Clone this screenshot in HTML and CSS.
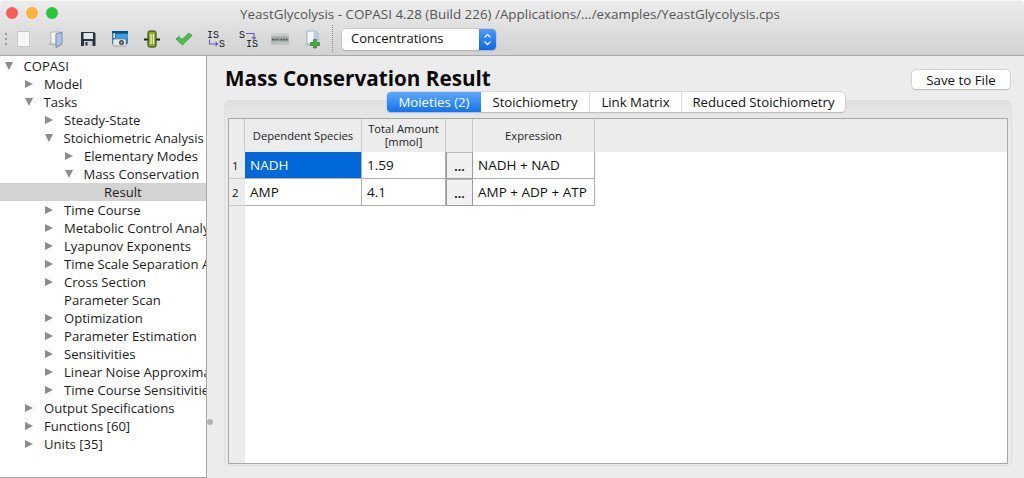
FILE: index.html
```html
<!DOCTYPE html>
<html>
<head>
<meta charset="utf-8">
<title>YeastGlycolysis - COPASI</title>
<link rel="stylesheet" href="styles.css">
</head>
<body>
<div class="window">

<div class="titlebar">
  <div class="lights"><span class="light red"></span><span class="light yellow"></span><span class="light green"></span></div>
  <div class="wintitle">YeastGlycolysis - COPASI 4.28 (Build 226) /Applications/.../examples/YeastGlycolysis.cps</div>
</div>

<div class="toolbar">
  <div class="grip"><i></i><i></i><i></i></div>
  <div class="tools">
    <svg class="tool" width="16" height="18" viewBox="0 0 16 18"><rect x="1.500" y="1.500" width="12" height="15" fill="#f6f6f6" stroke="#c8c8c8"/></svg>
    <svg class="tool" width="16" height="18" viewBox="0 0 16 18"><path d="M0 15l3-3V2h11v13l-5 2.500V15H3z" fill="#bdbdbd"/><path d="M3 2h10v1L8 4v10H3z" fill="#f4f4f4" stroke="#9a9a9a" stroke-width=".6"/><path d="M8 4l6-2v12l-6 3.500z" fill="#a7c4e4" stroke="#5f83ab" stroke-width=".8"/></svg>
    <svg class="tool" width="16" height="18" viewBox="0 0 16 18"><path d="M1 2h13l1.500 1.500V16H1z" fill="#27343f"/><rect x="3.500" y="3" width="9.500" height="6" fill="#e6e6e6"/><rect x="4" y="11" width="8.500" height="5" fill="#cfcfcf"/><rect x="5.500" y="12" width="2" height="3.500" fill="#27343f"/></svg>
    <svg class="tool" width="16" height="18" viewBox="0 0 16 18"><rect x="0" y="1" width="16" height="13" rx="1" fill="#1b86cc"/><rect x="0" y="1" width="16" height="2.500" fill="#0c4f86"/><path d="M4 4h12v5H4z" fill="#3aa0e0"/><rect x="1" y="9" width="13" height="7" rx="1.500" fill="#e8e8e8" stroke="#777" stroke-width=".6"/><circle cx="9.500" cy="12.500" r="2.500" fill="#4a4a4a"/><circle cx="9.500" cy="12.500" r="1" fill="#bbb"/><rect x="1.500" y="3" width="1.500" height="5" fill="#e8f2fa"/></svg>
    <svg class="tool" width="16" height="18" viewBox="0 0 16 18"><path d="M0 9.500h16" stroke="#222" stroke-width="2.200"/><rect x="4" y="1" width="8" height="16" rx="1.500" fill="#8eab22" stroke="#2c3510"/><path d="M7 4v10M9.500 4v10" stroke="#eef5c8" stroke-width="1.300"/></svg>
    <svg class="tool" width="16" height="18" viewBox="0 0 16 18"><path d="M0 9l3-2.500 3 3L13 3l3 2.500L6.500 15z" fill="#4cc04a" stroke="#2c8a34" stroke-width=".7"/></svg>
    <svg class="tool" width="18" height="18" viewBox="0 0 18 18"><text x="0" y="8" class="ico">IS</text><text x="12" y="17" class="ico">S</text><path d="M2.500 9.500v4.500h8M8.500 12l2.200 2-2.200 2" fill="none" stroke="#5b5fc0" stroke-width="1.100"/></svg>
    <svg class="tool" width="18" height="18" viewBox="0 0 18 18"><text x="0" y="8" class="ico">S</text><text x="7" y="17" class="ico">IS</text><path d="M7 3.500h8v5M13 7l2 2.200 2-2.200" fill="none" stroke="#5b5fc0" stroke-width="1.100"/></svg>
    <svg class="tool" width="18" height="18" viewBox="0 0 18 18"><rect x="0" y="3" width="18" height="12" fill="#a9b4ae"/><rect x="0" y="3" width="18" height="3" fill="#c8d0cc"/><rect x="0" y="12" width="18" height="3" fill="#bcc4c0"/><path d="M1 9.500h16" stroke="#4f5b66" stroke-width="2.200" stroke-dasharray="2 .7"/><path d="M2 14L14 5" stroke="#c79ab0" stroke-width=".7"/></svg>
    <svg class="tool" width="16" height="18" viewBox="0 0 16 18"><path d="M0 15l3-3V3h9v13H3z" fill="#c8c8c8"/><path d="M3 1h8l3 2v11H3z" fill="#f5f7fa" stroke="#8aa3bd" stroke-width=".8"/><path d="M9.500 2l4.500 1v8H9.500z" fill="#b7cde4"/><path d="M6.500 12.500h3v-3h3v3h3v3h-3v2.500h-3v-2.500h-3z" fill="#49ad3c" stroke="#256f22" stroke-width=".6"/></svg>
  </div>
  <div class="sep"></div>
  <div class="combo">
    <span class="combo-text">Concentrations</span>
    <span class="combo-arrows"><svg width="9" height="15" viewBox="0 0 9 15"><path d="M1.500 5.500L4.500 2.500l3 3M1.500 9.500l3 3 3-3" fill="none" stroke="#fff" stroke-width="1.300"/></svg></span>
  </div>
</div>

<div class="body">
  <ul class="tree">
    <li class="l0"><span class="arrow down"></span>COPASI</li>
    <li class="l1"><span class="arrow right"></span>Model</li>
    <li class="l1"><span class="arrow down"></span>Tasks</li>
    <li class="l2"><span class="arrow right"></span>Steady-State</li>
    <li class="l2"><span class="arrow down"></span>Stoichiometric Analysis</li>
    <li class="l3"><span class="arrow right"></span>Elementary Modes</li>
    <li class="l3"><span class="arrow down"></span>Mass Conservation</li>
    <li class="l4 current"><span class="arrow"></span>Result</li>
    <li class="l2"><span class="arrow right"></span>Time Course</li>
    <li class="l2"><span class="arrow right"></span>Metabolic Control Analysis</li>
    <li class="l2"><span class="arrow right"></span>Lyapunov Exponents</li>
    <li class="l2"><span class="arrow right"></span>Time Scale Separation Analysis</li>
    <li class="l2"><span class="arrow right"></span>Cross Section</li>
    <li class="l2"><span class="arrow"></span>Parameter Scan</li>
    <li class="l2"><span class="arrow right"></span>Optimization</li>
    <li class="l2"><span class="arrow right"></span>Parameter Estimation</li>
    <li class="l2"><span class="arrow right"></span>Sensitivities</li>
    <li class="l2"><span class="arrow right"></span>Linear Noise Approximation</li>
    <li class="l2"><span class="arrow right"></span>Time Course Sensitivities</li>
    <li class="l1"><span class="arrow right"></span>Output Specifications</li>
    <li class="l1"><span class="arrow right"></span>Functions [60]</li>
    <li class="l1"><span class="arrow right"></span>Units [35]</li>
  </ul>

  <div class="splitter"><span class="handle"></span></div>

  <div class="main">
    <div class="head">
      <h1>Mass Conservation Result</h1>
      <button class="btn">Save to File</button>
    </div>
    <div class="tabs">
      <span class="tab active">Moieties (2)</span><span class="tab t2">Stoichiometry</span><span class="tab t3">Link Matrix</span><span class="tab t4">Reduced Stoichiometry</span>
    </div>
    <div class="pane">
      <div class="frame">
        <table class="grid">
          <colgroup><col class="c0"><col class="c1"><col class="c2"><col class="c3"><col class="c4"></colgroup>
          <tr class="hdr"><th></th><th>Dependent Species</th><th>Total Amount<br>[mmol]</th><th></th><th>Expression</th></tr>
          <tr><td class="num">1</td><td class="sel">NADH</td><td>1.59</td><td class="more"><span class="dots">...</span></td><td>NADH + NAD</td></tr>
          <tr><td class="num">2</td><td>AMP</td><td>4.1</td><td class="more"><span class="dots">...</span></td><td>AMP + ADP + ATP</td></tr>
        </table>
        <div class="gutter"></div>
      </div>
    </div>
  </div>
</div>

</div>
</body>
</html>
```

FILE: styles.css
```css
html, body { margin:0; padding:0; background:#fff; }
body { font-family:"Open Sans", "DejaVu Sans", sans-serif; font-size:13.1px; color:#111; }
ul { list-style:none; margin:0; padding:0; }

.window { width:1024px; height:478px; display:flex; flex-direction:column; overflow:hidden; border-radius:5px 5px 0 0; background:#ececec; }

/* title bar */
.titlebar { height:25px; flex:none; position:relative; background:linear-gradient(#ececec, #e0e0e0); box-sizing:border-box; border-top:1px solid #f6f6f6; }
.lights { display:flex; gap:8px; padding:6px 0 0 6px; }
.light { width:12px; height:12px; border-radius:50%; }
.red { background:#fc5b57; }
.yellow { background:#fdb43c; }
.green { background:#27c840; }
.wintitle { position:absolute; left:0; right:0; top:4px; text-align:center; color:#555; font-size:13.400px; line-height:18px; padding-right:4px; }

/* toolbar */
.toolbar { height:31px; flex:none; display:flex; align-items:center; box-sizing:border-box; border-bottom:1px solid #a9a9a9; background:linear-gradient(#e0e0e0, #d2d2d2); padding-bottom:3px; }
.grip { width:2px; margin-left:5px; display:flex; flex-direction:column; gap:3px; }
.grip i { width:2px; height:2px; background:#9a9a9a; display:block; }
.tools { display:grid; grid-template-columns:repeat(10, 32px); margin-left:1px; align-items:center; justify-items:center; }
.tool { overflow:visible; }
.ico { font-family:"Liberation Mono", monospace; font-size:10px; fill:#111; }
.sep { width:0; height:27px; margin-left:4px; border-left:1px dotted #888; }
.combo { width:154px; height:21px; margin:2px 0 0 9px; box-sizing:border-box; display:flex; background:#fff; border-radius:4px; box-shadow:0 0 0 .5px #b5b5b5, 0 1px 1px #aaa; overflow:hidden; }
.combo-text { flex:1; padding-left:9px; line-height:19px; font-size:13px; color:#111; }
.combo-arrows { width:17px; display:flex; align-items:center; justify-content:center; background:linear-gradient(#4a9bfb, #0b66ea); }

/* tree and main */
.body { flex:1; display:flex; min-height:0; }
.tree { width:206px; flex:none; box-sizing:border-box; background:#fff; border-bottom:1px solid #aaa; padding-top:1px; overflow:hidden; height:100%; }
.tree li { height:18px; line-height:18px; white-space:nowrap; color:#1c1c1c; display:flex; align-items:center; overflow:hidden; }
.tree .l0 { padding-left:5px; }
.tree .l1 { padding-left:25px; }
.tree .l2 { padding-left:45px; }
.tree .l3 { padding-left:65px; }
.tree .l4 { padding-left:85px; }
.tree .current { background:#d3d3d3; }
.arrow { width:14px; margin-right:5px; height:10px; flex:none; display:block; }
.arrow.right { width:0; height:0; border-style:solid; border-width:4.500px 0 4.500px 8px; border-color:transparent transparent transparent #8c8c8c; margin-right:11px; }
.arrow.down { width:0; height:0; border-style:solid; border-width:8px 4.500px 0 4.500px; border-color:#8c8c8c transparent transparent transparent; margin-right:10.500px; }

.splitter { width:1px; flex:none; background:#a9a9a9; position:relative; }
.handle { position:absolute; left:1px; top:363px; width:6px; height:6px; border-radius:50%; background:#b4b4b4; }

.main { flex:1; display:flex; flex-direction:column; padding:0 13px 13px 18px; min-width:0; }
.head { display:flex; justify-content:space-between; align-items:flex-start; height:36px; flex:none; }
h1 { margin:9px 0 0; font-size:20.700px; line-height:27px; font-weight:700; color:#0a0a0a; }
.btn { margin:14px 1px 0 0; width:98px; height:19px; padding:0; background:#fff; border:0; border-radius:4px; box-shadow:0 0 0 .5px #bdbdbd, 0 1px 1px #b5b5b5; font:13.300px "Open Sans", sans-serif; color:#111; }

.tabs { display:flex; height:20px; flex:none; margin-left:162px; position:relative; z-index:1; width:max-content; background:#fff; border-radius:4px; box-shadow:0 0 0 .5px #c4c4c4, 0 1px 1px #bbb; }
.tab { display:block; line-height:20px; text-align:center; font-size:13.200px; color:#111; box-sizing:border-box; border-left:1px solid #dcdcdc; }
.tab.active { width:94px; color:#fff; border:0; border-radius:4px 0 0 4px; background:linear-gradient(#5fa9fb, #1274ee); }
.t2 { width:108px; border-left:0; }
.t3 { width:92px; }
.t4 { width:164px; }

.pane { flex:1; margin-top:-11px; background:linear-gradient(#e0e0e0, #e9e9e9 24px); border-radius:4px; box-shadow:0 0 0 1px #dfdfdf; padding:17px 3px 1px 3px; display:flex; min-height:0; }
.frame { flex:1; background:linear-gradient(#ececec 33px, #fff 33px); border:1px solid #a8a8a8; box-sizing:border-box; position:relative; }
.gutter { position:absolute; left:0; top:33px; bottom:0; width:16px; background:#ececec; }

.grid { border-collapse:separate; border-spacing:0; table-layout:fixed; width:366px; position:relative; z-index:1; }
.c0 { width:16px; } .c1 { width:117px; } .c2 { width:84px; } .c3 { width:27px; } .c4 { width:122px; }
.grid th { height:33px; box-sizing:border-box; background:#ececec; font-weight:400; font-size:11.200px; line-height:13px; color:#222; padding:0 0 1px; text-align:center; border-right:1px solid #c8c8c8; }
.grid td { height:27px; box-sizing:border-box; background:#fff; padding:0 0 0 5px; font-size:13.500px; border-right:1px solid #b0b0b0; border-bottom:1px solid #b0b0b0; color:#111; }
.grid td.num { background:#ececec; font-size:11.500px; padding:0 0 0 3px; border-right:0; border-bottom:1px solid #c8c8c8; }
.grid td.sel { background:#0068d9; color:#fff; }
.grid td.more { background:#f0f0f0; padding:0; text-align:center; border:1px solid #9c9c9c; border-top-color:#bbb; }
.dots { font-weight:700; font-size:12px; }
```
